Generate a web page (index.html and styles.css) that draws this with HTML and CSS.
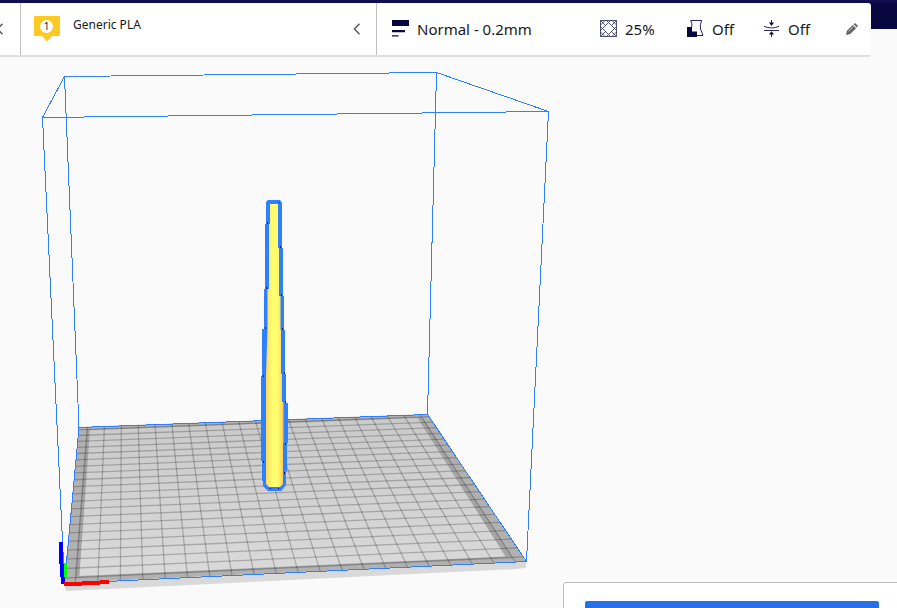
FILE: index.html
```html
<!DOCTYPE html>
<html lang="en">
<head>
<meta charset="utf-8">
<title>Print preparation</title>
<link rel="stylesheet" href="styles.css">
</head>
<body>
<div class="app">
  <svg class="viewport" viewBox="0 0 897 608" aria-hidden="true">
    <defs>
      <linearGradient id="plate" x1="0" y1="0" x2="0" y2="1">
        <stop offset="0" stop-color="#cacaca"/><stop offset="1" stop-color="#dadada"/>
      </linearGradient>
      <linearGradient id="rod" gradientUnits="userSpaceOnUse" x1="265" y1="0" x2="284" y2="0">
        <stop offset="0" stop-color="#ffcf60"/><stop offset=".2" stop-color="#ffe967"/><stop offset=".4" stop-color="#ffff70"/>
        <stop offset=".65" stop-color="#fffe6e"/><stop offset=".85" stop-color="#ffe065"/><stop offset="1" stop-color="#f3bf60"/>
      </linearGradient>
    </defs>
    <path fill="#d9d9d9" d="M64 583 526 561.5V568L516 569 66 591Z"/>
    <path fill="#b1b1b1" d="M79 427 428 414 526 561.5 64 583Z"/>
    <g id="bed"></g>
    <g class="volume">
      <path d="M42.5 117.5 64.5 76.5 436.5 72.5 548.5 111.5ZM42.5 117.5 64.5 583.5M64.5 76.5 79 427.5M436.5 72.5 427.5 414.5M548.5 111.5 526.5 561.5M79 427.5 427.5 414.5 526.5 561.5 64.5 583.5Z"/>
    </g>
    <path fill="#2f80ff" d="M268 200H280L282 203V248H283V296H284V330H285V374H286V403H288V443H287V471H286V485L281 491H268L263 486V481H262V461H261V376H262V329H264V289H265V224H266V202Z"/>
    <path fill="url(#rod)" d="M270 204H278V248H279V296H280.500V330H281V374H282V402H283.500V443H283V484L280 487H269L266 484V376L267.500 329V289H269V224H270Z"/>
    <path fill="#0000c8" d="M267 222h1v2h-1zM266 287h1v2h-1zM265 327h1v2h-1zM263 375h1v2h-1zM263 461h1v2h-1zM279 202h1v1h-1zM280 246h1v2h-1zM281 294h1v2h-1zM282 328h1v2h-1zM284 372h1v2h-1zM285 401h1v2h-1zM285 443h1v2h-1zM284 472h1v2h-1zM270 488h1v1h-1zM278 488h1v1h-1z"/>
    <path class="axis-z" d="M61 542V557L62 570 63 584"/>
    <path class="axis-y" d="M65.500 563V577"/>
    <path class="axis-x" d="M64 584.500 82 583.500 109 582"/>
  </svg>
  <div class="masthead"></div>
  <header class="toolbar">
    <div class="panel printer"><svg class="chev" viewBox="0 0 8 12"><path d="M6.500 .7 1.500 6 6.500 11.300"/></svg></div>
    <div class="panel material">
      <svg class="extruder" viewBox="0 0 26 26"><path fill="#ffc924" d="M1 0H25Q26 0 26 1V19Q26 20 25 20H18L13 25.600 8 20H1Q0 20 0 19V1Q0 0 1 0Z"/><circle cx="12.500" cy="10.500" r="6.500" fill="#fff"/><text x="12.500" y="14.200" text-anchor="middle">1</text></svg>
      <span class="material-name">Generic PLA</span>
      <svg class="chev" viewBox="0 0 8 12"><path d="M6.500 .7 1.500 6 6.500 11.300"/></svg>
    </div>
    <div class="panel settings">
      <svg class="icon" viewBox="0 0 17 17"><path fill="#08073f" d="M0 0H17V6H0ZM0 10H13V12.300H0ZM0 15.300H6.500V16.600H0Z"/></svg>
      <span class="profile">Normal - 0.2mm</span>
      <svg class="icon line infill" viewBox="0 0 17 17"><path d="M.5 .5H16.500V16.500H.5ZM.5 5 5 .5M12 .5 16.500 5M.5 12 5 16.500M16.500 12 12 16.500M8.500 2.500 14.500 8.500 8.500 14.500 2.500 8.500ZM.5 .5 5.500 5.500M16.500 .5 11.500 5.500M.5 16.500 5.500 11.500M16.500 16.500 11.500 11.500M6.500 .5 8.500 2.500 10.500 .5M6.500 16.500 8.500 14.500 10.500 16.500M.5 6.500 2.500 8.500 .5 10.500M16.500 6.500 14.500 8.500 16.500 10.500"/></svg>
      <span class="value v-infill">25%</span>
      <svg class="icon support" viewBox="0 0 17 17"><path fill="#08073f" d="M0 7H5V11.500H10V17H0Z"/><path fill="none" stroke="#28285a" d="M3.700 .5H14.700Q12.500 5 13.500 9L16 15.500H10M3.700 .5Q5.700 4 4.700 7"/></svg>
      <span class="value v-support">Off</span>
      <svg class="icon adhesion" viewBox="0 0 15 17"><path fill="none" stroke="#28285a" d="M0 6.300Q7.500 9.600 15 6.300M0 10.500H15M7.500 0V4M7.500 17V13"/><path fill="#08073f" d="M5 2.500H10L7.500 6ZM5 14.500H10L7.500 11.200Z"/></svg>
      <span class="value v-adhesion">Off</span>
      <svg class="pencil" viewBox="0 0 12 12"><path fill="#666" d="M0 12 .9 7.800 6.800 1.900 10.100 5.200 4.200 11.100ZM7.500 1.200 8.400 .4Q9 0 9.600 .4L11.600 2.400Q12 3 11.600 3.600L10.800 4.500Z"/><path stroke="#ddd" stroke-width=".7" d="M2.500 8.500 7.500 3.500"/></svg>
    </div>
  </header>
  <section class="action-panel"><div class="slice-button"></div></section>
</div>
<script src="bed.js"></script>
</body>
</html>
```
FILE: styles.css
```css
* { box-sizing: border-box; }
body { margin: 0; overflow: hidden; background: #fafafa; color: #191919; font-family: "Noto Sans", sans-serif; }
.app { position: relative; width: 897px; height: 608px; overflow: hidden; }
.viewport { position: absolute; inset: 0; width: 897px; height: 608px; }
.volume { fill: none; stroke: #2f80ff; stroke-width: 1; shape-rendering: crispEdges; }
.grid-line { stroke: rgba(0, 0, 0, .22); stroke-width: 1.3; }
.axis-x, .axis-y, .axis-z { fill: none; stroke-width: 4; shape-rendering: crispEdges; }
.axis-x { stroke: #f00; }
.axis-y { stroke: #0f0; stroke-width: 3; }
.axis-z { stroke: #00f; }
.masthead { height: 29px; background: #08073f; margin-left: 860px; }
.app::before { content: ""; display: block; position: absolute; width: 897px; height: 3px; background: #100e50; }
.toolbar { position: absolute; top: 3px; left: 0; width: 871px; height: 54px; display: flex; background: #fff; border-bottom: 2px solid #dedede; border-radius: 0 3px 3px 0; }
.panel { display: flex; align-items: center; height: 52px; padding-bottom: 1px; }
.printer { width: 21px; border-right: 1px solid #c0c0c0; overflow: hidden; }
.printer .chev { margin-left: -4px; }
.material { width: 356px; border-right: 1px solid #c0c0c0; padding: 0 15px 1px 13px; }
.settings { flex: 1; padding-left: 15px; }
.chev { width: 8px; height: 12px; flex: none; fill: none; stroke: #626262; stroke-width: 1.6; }
.extruder { width: 26px; height: 26px; flex: none; }
.extruder text { font-size: 10px; fill: #191919; }
.material-name { font-size: 12px; line-height: 18px; margin: -8px auto 0 13px; white-space: nowrap; }
.icon { width: 17px; height: 17px; flex: none; }
.line { fill: none; stroke: #28285a; stroke-width: .8; }
.profile { font-size: 15px; width: 183px; margin-left: 8px; white-space: nowrap; }
.value { font-size: 15px; margin-left: 8px; }
.v-infill { width: 62px; }
.v-support { width: 52px; }
.v-adhesion { margin-left: 9px; }
.adhesion { width: 15px; margin-left: 0; }
.pencil { width: 12px; height: 12px; margin-left: auto; margin-right: 13px; }
.action-panel { position: absolute; left: 563px; top: 582px; width: 350px; height: 60px; padding: 18px 0 0 21px; background: #fff; border: 1px solid #bebebe; border-radius: 3px; }
.slice-button { width: 294px; height: 40px; border-radius: 2px; background: #2670e8; }
```
FILE: bed.js
```js
// Projects a square bed of 21 x 21 cells onto its four screen corners.
const [A, B, C, D] = [[79, 427], [428, 414], [526, 561.5], [64, 583]];
const N = 21;
const sx = A[0] - B[0] + C[0] - D[0], sy = A[1] - B[1] + C[1] - D[1];
const dx1 = B[0] - C[0], dx2 = D[0] - C[0], dy1 = B[1] - C[1], dy2 = D[1] - C[1];
const det = dx1 * dy2 - dx2 * dy1;
const g = (sx * dy2 - dx2 * sy) / det, h = (dx1 * sy - sx * dy1) / det;
function at(i, j) {
  const u = i / N, v = j / N, w = g * u + h * v + 1;
  const f = k => ((B[k] - A[k] + g * B[k]) * u + (D[k] - A[k] + h * D[k]) * v + A[k]) / w;
  return f(0).toFixed(2) + "," + f(1).toFixed(2);
}
const quad = (a, b, c, d, fill) =>
  `<polygon fill="${fill}" points="${at(a, b)} ${at(c, b)} ${at(c, d)} ${at(a, d)}"/>`;
const line = (p, q) => `<path class="grid-line" d="M${p}L${q}"/>`;
let out = quad(0.45, 0.45, 20.5, 20.5, "#a4a4a4") + quad(0.66, 0.66, 20.22, 20.36, "url(#plate)");
for (let i = 0.5; i < N; i++) {
  out += line(at(i, 0), at(i, N)) + line(at(0, i), at(N, i));
}
document.getElementById("bed").innerHTML = out;
```
